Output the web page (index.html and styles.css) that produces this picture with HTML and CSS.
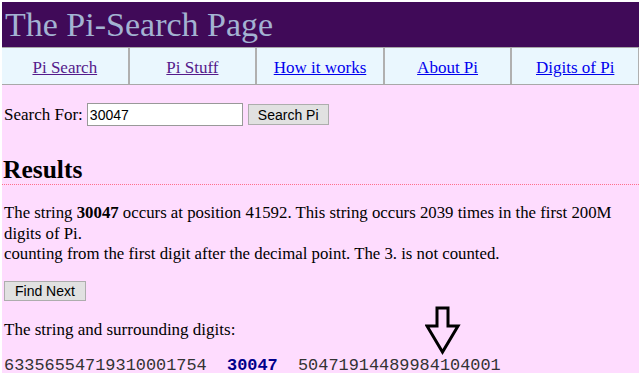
FILE: index.html
```html
<!DOCTYPE html>
<html>
<head>
<meta charset="utf-8">
<link rel="stylesheet" href="styles.css">
</head>
<body>
<div class="page">
  <div class="header">The Pi-Search Page</div>
  <div class="nav">
    <div class="cell"><a class="visited" href="#">Pi Search</a></div>
    <div class="cell"><a class="visited" href="#">Pi Stuff</a></div>
    <div class="cell"><a href="#">How it works</a></div>
    <div class="cell"><a href="#">About Pi</a></div>
    <div class="cell"><a href="#">Digits of Pi</a></div>
  </div>
  <div class="content">
    <form class="search">
      <label>Search For:</label>
      <input class="field" type="text" value="30047">
      <button class="btn" type="button">Search Pi</button>
    </form>
    <h2 class="results">Results</h2>
    <p class="info">The string <b>30047</b> occurs at position 41592. This string occurs 2039 times in the first 200M digits of Pi.<br>counting from the first digit after the decimal point. The 3. is not counted.</p>
    <button class="btn next" type="button">Find Next</button>
    <p class="surround">The string and surrounding digits:</p>
    <div class="digits">
      <span>63356554719310001754</span>&nbsp;&nbsp;<b class="hit">30047</b>&nbsp;&nbsp;<span>50471914489984104001</span>
      <svg class="arrow" width="36" height="50" viewBox="0 0 36 50">
        <path d="M12 2 H23 V20 H33 L17.5 46 L2 20 H12 Z" fill="none" stroke="#000" stroke-width="3" stroke-linejoin="miter"/>
      </svg>
    </div>
  </div>
</div>
</body>
</html>
```
FILE: styles.css
```css
html, body {
  margin: 0;
  padding: 0;
  background: #ffffff;
}
body {
  padding: 2px 1px 0 2px;
  font-family: "Liberation Serif", "Times New Roman", serif;
  font-size: 17px;
  color: #000;
}
.page {
  background: #fedcfe;
  min-height: 371px;
}
.header {
  background: #400a58;
  color: #a3b3d2;
  font-size: 34px;
  line-height: 45px;
  height: 45px;
  padding-left: 3px;
}
.nav {
  display: flex;
  background: #eaf7fe;
  border-top: 1px solid #a8a8a8;
  border-bottom: 1px solid #a8a8a8;
  height: 36px;
}
.cell {
  flex: 1;
  display: flex;
  align-items: center;
  justify-content: center;
  border-right: 2px solid #b0b0b0;
  padding-top: 3px;
}
.cell:last-child {
  border-right: 1px solid #b0b0b0;
}
.cell a {
  color: #0000ee;
  font-size: 17px;
}
.cell a.visited {
  color: #551a8b;
}
.content {
  padding: 0 0 0 2px;
}
.search {
  margin: 0;
  padding-top: 18px;
  display: flex;
  align-items: center;
  height: 23px;
}
.search label {
  margin-right: 4px;
}
.field {
  box-sizing: border-box;
  width: 156px;
  height: 23px;
  border: 1px solid #999;
  background: #fff;
  font-family: "Liberation Sans", Arial, sans-serif;
  font-size: 14px;
  padding: 0 2px;
  margin: 0 5px 0 0;
}
.btn {
  box-sizing: border-box;
  height: 21px;
  border: 1px solid #adadad;
  background: #e1e1e1;
  font-family: "Liberation Sans", Arial, sans-serif;
  font-size: 14px;
  padding: 0 9px;
  margin: 0;
  color: #000;
}
.results {
  margin: 30px -2px 0 -2px;
  padding: 0 2px 0 1px;
  font-size: 25.5px;
  line-height: 28px;
  border-bottom: 1px dotted #ff6f8c;
}
.info {
  margin: 18px 0 0;
  font-size: 16.8px;
  line-height: 20.5px;
}
.next {
  margin-top: 16px;
  height: 20px;
  padding: 0 10px;
}
.surround {
  margin: 19px 0 0;
  line-height: 20px;
}
.digits {
  position: relative;
  margin-top: 17px;
  font-family: "Liberation Mono", "Courier New", monospace;
  font-size: 16.9px;
  line-height: 18px;
  color: #333;
}
.hit {
  color: #00008b;
}
.arrow {
  position: absolute;
  left: 421px;
  top: -51px;
}
```
